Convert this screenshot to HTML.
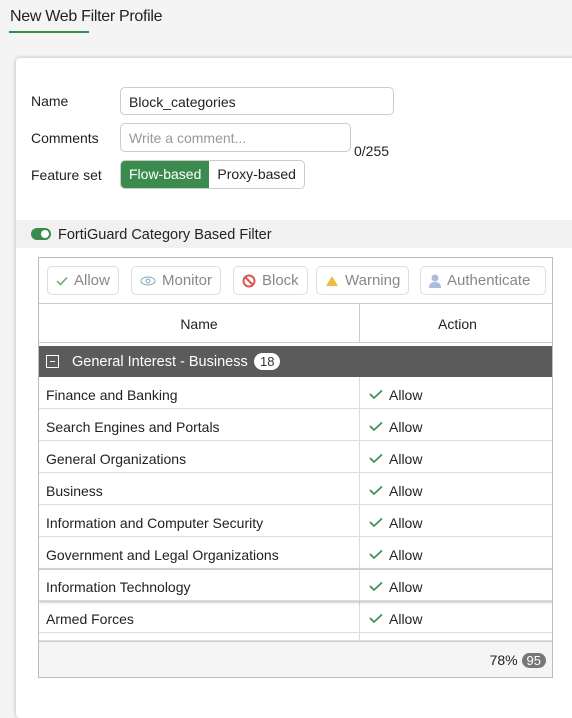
<!DOCTYPE html><html><head><style>
body{margin:0;width:572px;height:688px;background:#f4f4f4;font-family:"Liberation Sans",sans-serif;font-size:14px;color:#222;position:relative;overflow:hidden}
.abs{position:absolute}
.title{left:10px;top:8px;font-size:16px;color:#222;letter-spacing:-0.3px}
.uline{left:9px;top:31px;width:80px;height:2px;background:#3b8a4e}
.card{left:16px;top:58px;width:570px;height:660px;background:#fff;border-radius:4px;box-shadow:0 0 4px rgba(0,0,0,.25)}
.lbl{left:31px;font-size:14px}
.inp{border:1px solid #ccc;border-radius:5px;background:#fff;box-sizing:border-box;padding-left:8px;line-height:26px}
.seg{left:120px;top:160px;height:29px;border:1px solid #ccc;border-radius:5px;display:flex;overflow:hidden;box-sizing:border-box}
.seg div{padding:0 8px;line-height:27px}
.bar{left:16px;top:220px;width:556px;height:28px;background:#f1f1f1}
.tog{left:31px;top:228px;width:20px;height:12px;border-radius:6px;background:#3b8a4e}
.tog:after{content:"";position:absolute;right:2px;top:2px;width:8px;height:8px;border-radius:50%;background:#fff}
.tbl{left:38px;top:257px;width:515px;height:421px;border:1px solid #bbb;box-sizing:border-box;background:#fff;overflow:hidden}
.btn{top:8px;height:29px;border:1px solid #ddd;border-radius:5px;box-sizing:border-box;color:#888;font-size:15px;display:flex;align-items:center;gap:6px;padding:0 8px}
.hdr{top:45px;left:0;width:515px;height:40px;border-top:1px solid #ccc;border-bottom:1px solid #ccc;box-sizing:border-box}
.row{left:0;width:515px;height:32px;border-bottom:1px solid #ddd;box-sizing:border-box;line-height:36px}
.row .n{position:absolute;left:7px}
.row .a{position:absolute;left:320px;top:0;bottom:0;border-left:1px solid #ddd;padding-left:9px;width:200px}
.chk{display:inline-block;vertical-align:middle;margin-right:6px;margin-top:-4px}
</style></head><body>
<div class="abs title">New Web Filter Profile</div>
<div class="abs uline"></div>
<div class="abs card"></div>
<div class="abs lbl" style="top:93px">Name</div>
<div class="abs inp" style="left:120px;top:87px;width:274px;height:28px;padding-top:1px">Block_categories</div>
<div class="abs lbl" style="top:130px">Comments</div>
<div class="abs inp" style="left:120px;top:123px;width:231px;height:29px;color:#999;padding-top:1px">Write a comment...</div>
<div class="abs" style="left:354px;top:143px">0/255</div>
<div class="abs lbl" style="top:167px">Feature set</div>
<div class="abs seg"><div style="background:#3b8a4e;color:#fff">Flow-based</div><div>Proxy-based</div></div>
<div class="abs bar"></div>
<div class="abs tog"></div>
<div class="abs" style="left:58px;top:227px;font-size:14.5px">FortiGuard Category Based Filter</div>
<div class="abs tbl">
<div class="abs btn" style="left:8px"><svg width="12" height="10"><path d="M1 5l3.5 3.5L11 1.5" stroke="#6a6" stroke-width="1.5" fill="none"/></svg>Allow</div>
<div class="abs btn" style="left:92px"><svg width="16" height="10"><ellipse cx="8" cy="5" rx="7" ry="4" stroke="#7ab" fill="none"/><circle cx="8" cy="5" r="2" stroke="#7ab" fill="none"/></svg>Monitor</div>
<div class="abs btn" style="left:194px"><svg width="14" height="14"><circle cx="7" cy="7" r="5.5" stroke="#d55" stroke-width="2" fill="none"/><path d="M3 3l8 8" stroke="#d55" stroke-width="2"/></svg>Block</div>
<div class="abs btn" style="left:277px"><svg width="14" height="12"><path d="M7 1L13 11H1z" fill="#eb4"/></svg>Warning</div>
<div class="abs btn" style="left:381px;width:126px"><svg width="12" height="14"><circle cx="6" cy="4" r="3.5" fill="#abd"/><path d="M0 14q0-6 6-6t6 6z" fill="#abd"/></svg>Authenticate</div>
<div class="abs hdr"><div class="abs" style="left:0;width:320px;text-align:center;top:12px">Name</div><div class="abs" style="left:320px;top:0;bottom:0;border-left:1px solid #ccc;width:195px;text-align:center;line-height:40px">Action</div></div>
<div class="abs" style="left:0;top:88px;width:515px;height:31px;background:#5b5b5b;color:#fff;font-size:14.5px;line-height:32px">
<span class="abs" style="left:7px;top:9px;width:13px;height:13px;border:1px solid #fff;box-sizing:border-box"><span class="abs" style="left:3px;top:5px;width:5px;height:1px;background:#fff"></span></span>
<span class="abs" style="left:33px">General Interest - Business</span>
<span class="abs" style="left:215px;top:7px;background:#fff;color:#333;border-radius:9px;line-height:17px;padding:0 6px;font-size:13px">18</span></div>
<div class="abs row" style="top:119px"><span class="n">Finance and Banking</span><span class="a"><svg class="chk" width="14" height="10"><path d="M1 5l4 4L13 1.5" stroke="#3b8a4e" stroke-width="1.6" fill="none"/></svg>Allow</span></div>
<div class="abs row" style="top:151px"><span class="n">Search Engines and Portals</span><span class="a"><svg class="chk" width="14" height="10"><path d="M1 5l4 4L13 1.5" stroke="#3b8a4e" stroke-width="1.6" fill="none"/></svg>Allow</span></div>
<div class="abs row" style="top:183px"><span class="n">General Organizations</span><span class="a"><svg class="chk" width="14" height="10"><path d="M1 5l4 4L13 1.5" stroke="#3b8a4e" stroke-width="1.6" fill="none"/></svg>Allow</span></div>
<div class="abs row" style="top:215px"><span class="n">Business</span><span class="a"><svg class="chk" width="14" height="10"><path d="M1 5l4 4L13 1.5" stroke="#3b8a4e" stroke-width="1.6" fill="none"/></svg>Allow</span></div>
<div class="abs row" style="top:247px"><span class="n">Information and Computer Security</span><span class="a"><svg class="chk" width="14" height="10"><path d="M1 5l4 4L13 1.5" stroke="#3b8a4e" stroke-width="1.6" fill="none"/></svg>Allow</span></div>
<div class="abs row" style="top:279px"><span class="n">Government and Legal Organizations</span><span class="a"><svg class="chk" width="14" height="10"><path d="M1 5l4 4L13 1.5" stroke="#3b8a4e" stroke-width="1.6" fill="none"/></svg>Allow</span></div>
<div class="abs row" style="top:311px;box-shadow:0 1px 3px rgba(0,0,0,.3);z-index:1;background:#fff;border-top:1px solid #ccc;line-height:34px"><span class="n">Information Technology</span><span class="a"><svg class="chk" width="14" height="10"><path d="M1 5l4 4L13 1.5" stroke="#3b8a4e" stroke-width="1.6" fill="none"/></svg>Allow</span></div>
<div class="abs row" style="top:343px"><span class="n">Armed Forces</span><span class="a"><svg class="chk" width="14" height="10"><path d="M1 5l4 4L13 1.5" stroke="#3b8a4e" stroke-width="1.6" fill="none"/></svg>Allow</span></div>
<div class="abs row" style="top:375px;height:8px"><span class="a"></span></div>
<div class="abs" style="left:0;top:383px;width:515px;height:38px;background:#f5f5f5;border-top:1px solid #ccc"><span class="abs" style="right:8px;top:10px">78% <span style="background:#777;color:#fff;border-radius:9px;padding:0 5px;font-size:13px">95</span></span></div>
</div>
</body></html>
